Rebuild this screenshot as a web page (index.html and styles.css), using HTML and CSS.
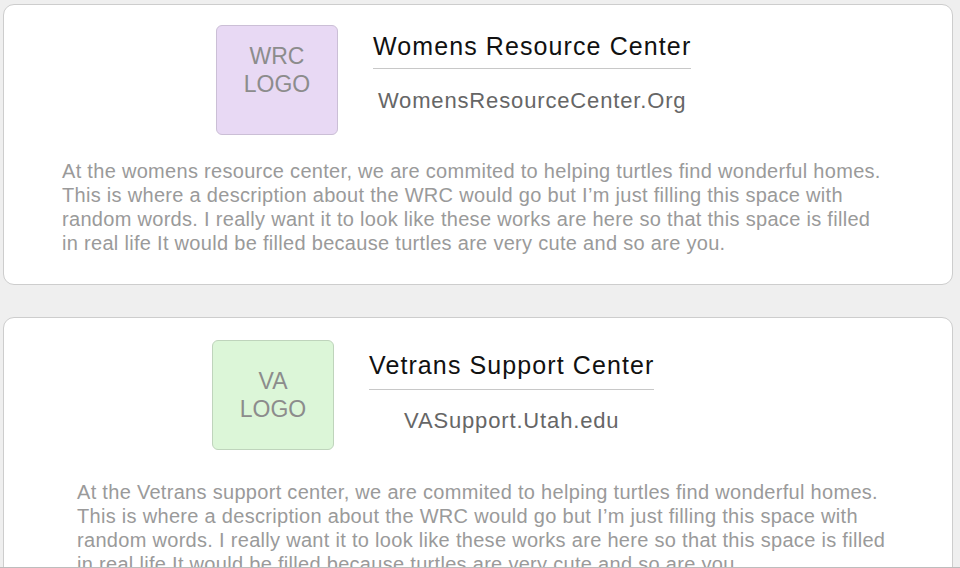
FILE: index.html
```html
<!DOCTYPE html>
<html lang="en">
<head>
<meta charset="utf-8">
<title>Resource Centers</title>
<link rel="stylesheet" href="styles.css">
</head>
<body>
<div class="page">
  <section class="card card--wrc">
    <div class="head">
      <div class="logo logo--purple"><span>WRC<br>LOGO</span></div>
      <div class="info">
        <h2 class="title">Womens Resource Center</h2>
        <div class="url">WomensResourceCenter.Org</div>
      </div>
    </div>
    <p class="desc">At the womens resource center, we are commited to helping turtles find wonderful homes.<br>This is where a description about the WRC would go but I’m just filling this space with<br>random words. I really want it to look like these works are here so that this space is filled<br>in real life It would be filled because turtles are very cute and so are you.</p>
  </section>
  <section class="card card--va">
    <div class="head">
      <div class="logo logo--green"><span>VA<br>LOGO</span></div>
      <div class="info">
        <h2 class="title">Vetrans Support Center</h2>
        <div class="url">VASupport.Utah.edu</div>
      </div>
    </div>
    <p class="desc">At the Vetrans support center, we are commited to helping turtles find wonderful homes.<br>This is where a description about the WRC would go but I’m just filling this space with<br>random words. I really want it to look like these works are here so that this space is filled<br>in real life It would be filled because turtles are very cute and so are you.</p>
  </section>
</div>
</body>
</html>
```
FILE: styles.css
```css
* { box-sizing: border-box; }
html, body { margin: 0; padding: 0; }
body {
  background: #efefef;
  font-family: "Liberation Sans", Arial, Helvetica, sans-serif;
}
.page {
  height: 568px;
  overflow: hidden;
  padding: 4px 7px 0 3px;
  display: flex;
  flex-direction: column;
  gap: 32px;
  border-bottom: 1px solid #bdbdbd;
}
.card {
  flex-shrink: 0;
  background: #fff;
  border: 1px solid #cdcdcd;
  border-radius: 11px;
}
.head {
  display: flex;
  align-items: flex-start;
  gap: 35px;
}
.logo {
  width: 122px;
  height: 110px;
  border-radius: 6px;
  text-align: center;
  color: #8c8c8c;
  font-size: 23px;
  line-height: 28px;
  flex-shrink: 0;
}
.logo--purple {
  background: #e8d9f4;
  border: 1px solid #cbbfd6;
}
.logo--green {
  background: #dcf6d8;
  border: 1px solid #bfd4bc;
}
.info {
  display: flex;
  flex-direction: column;
  align-items: center;
}
.title {
  margin: 0;
  font-weight: normal;
  font-size: 25px;
  line-height: 30px;
  letter-spacing: 1.1px;
  color: #111;
  border-bottom: 1px solid #c8c8c8;
  padding-bottom: 7px;
}
.url {
  font-size: 22px;
  line-height: 26px;
  letter-spacing: 0.85px;
  color: #666;
  margin-top: 19px;
}
.desc {
  margin: 0;
  font-size: 20px;
  line-height: 24px;
  letter-spacing: 0.3px;
  color: #9a9a9a;
  white-space: nowrap;
}

/* Womens Resource Center card */
.card--wrc { padding: 20px 0 29px; }
.card--wrc .head { padding-left: 212px; }
.card--wrc .logo span { display: block; padding-top: 16px; }
.card--wrc .info { margin-top: 6px; }
.card--wrc .desc { margin-top: 24px; padding-left: 58px; }

/* Vetrans Support Center card */
.card--va { padding: 22px 0 25px; }
.card--va .head { padding-left: 208px; }
.card--va .logo span { display: block; padding-top: 26px; }
.card--va .info { margin-top: 10px; }
.card--va .title { padding-bottom: 9px; }
.card--va .url { margin-top: 18px; }
.card--va .desc { margin-top: 30px; padding-left: 73px; }
```
